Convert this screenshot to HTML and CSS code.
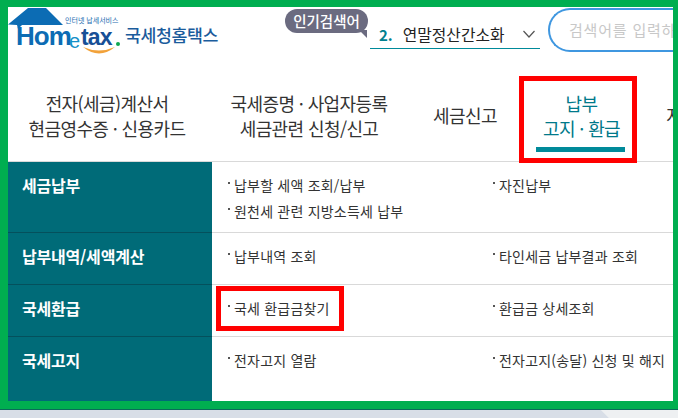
FILE: index.html
```html
<!DOCTYPE html>
<html lang="ko">
<head>
    <meta charset="UTF-8">
    <title>국세청홈택스</title>
    <link rel="stylesheet" href="styles.css">
</head>
<body>
    <div class="frame">
        <div class="header">
            <svg class="logo" width="277" height="54" viewBox="8 7 277 54">
                <!-- 지붕 -->
                <path d="M8 24.5 L28 8 L46 8 L63 25 L22 25 L18 29 L17 25 Z" fill="#0c6cb4"/>
                <path d="M83 47 Q99 60 115 47 Q99 54 83 47 Z" fill="#f2a23a"/>
                <circle cx="118" cy="44" r="2" fill="#10a850"/>
                <text class="logo-sub" x="65" y="23">인터넷 납세서비스</text>
                <text class="logo-home" x="16" y="45">Hom</text>
                <text class="logo-e" x="69" y="48">e</text>
                <text class="logo-tax" x="81" y="45">tax</text>
                <text class="logo-name" x="125" y="42">국세청홈택스</text>
            </svg>
            <div class="badge">인기검색어</div>
            <div class="rank">
                <span class="rank-num">2.</span>
                <span class="rank-text">연말정산간소화</span>
                <svg width="12" height="8" viewBox="0 0 12 8"><path d="M0.5 1 L6 7 L11.5 1" fill="none" stroke="#555" stroke-width="1.2"/></svg>
            </div>
            <div class="search">검색어를 입력하세요</div>
        </div>

        <div class="nav">
            <div class="nav-item nav-first">전자(세금)계산서<br>현금영수증 · 신용카드</div>
            <div class="nav-item nav-second">국세증명 · 사업자등록<br>세금관련 신청/신고</div>
            <div class="nav-item nav-third">세금신고</div>
            <div class="nav-item nav-active">납부<br>고지 · 환급<span class="mark-nav"></span></div>
            <div class="nav-item nav-last">지급명세</div>
        </div>

        <div class="menu">
            <div class="menu-row row-a">
                <div class="menu-title">세금납부</div>
                <div class="menu-links">
                    <div class="link">납부할 세액 조회/납부</div>
                    <div class="link">자진납부</div>
                    <div class="link">원천세 관련 지방소득세 납부</div>
                </div>
            </div>
            <div class="menu-row row-b">
                <div class="menu-title">납부내역/세액계산</div>
                <div class="menu-links">
                    <div class="link">납부내역 조회</div>
                    <div class="link">타인세금 납부결과 조회</div>
                </div>
            </div>
            <div class="menu-row row-b">
                <div class="menu-title">국세환급</div>
                <div class="menu-links">
                    <div class="link link-marked">국세 환급금찾기<span class="mark-link"></span></div>
                    <div class="link">환급금 상세조회</div>
                </div>
            </div>
            <div class="menu-row row-c">
                <div class="menu-title">국세고지</div>
                <div class="menu-links">
                    <div class="link">전자고지 열람</div>
                    <div class="link">전자고지(송달) 신청 및 해지</div>
                </div>
            </div>
        </div>
    </div>
</body>
</html>
```

FILE: styles.css
```css
* {
    margin: 0;
    padding: 0;
    box-sizing: border-box;
}

html, body {
    height: 418px;
    overflow: hidden;
}

body {
    font-family: "Noto Sans CJK KR", "Noto Sans", sans-serif;
    background: linear-gradient(45deg, #d8dee7 430px, #eef0f2 431px);
    color: #333;
}

.frame {
    height: 409px;
    width: 678px;
    background: #fff;
    border-style: solid;
    border-color: #00ae50;
    border-width: 7px 5px 8px 8px;
    box-shadow: 0 1px 0 #0a6a5a;
    overflow: hidden;
}

/* 상단 */
.header {
    display: flex;
    align-items: flex-start;
    height: 54px;
}

.logo {
    flex: none;
}

.logo-sub {
    font-size: 7px;
    fill: #1c6bb0;
}

.logo-home {
    font-family: "Liberation Sans", sans-serif;
    font-size: 26px;
    font-weight: bold;
    letter-spacing: -1px;
    fill: #0c6cb4;
}

.logo-e {
    font-family: "Liberation Sans", sans-serif;
    font-size: 20px;
    fill: #1590c8;
}

.logo-tax {
    font-family: "Liberation Sans", sans-serif;
    font-size: 23px;
    font-weight: bold;
    letter-spacing: -0.8px;
    fill: #174f96;
}

.logo-name {
    font-size: 17.3px;
    font-weight: 500;
    letter-spacing: -0.4px;
    fill: #1b5c9c;
}

.badge {
    position: relative;
    flex: none;
    width: 83px;
    height: 24px;
    margin-top: 2px;
    background: #6b6b80;
    border-radius: 12px;
    color: #fff;
    font-size: 14.5px;
    font-weight: 500;
    line-height: 23px;
    text-align: center;
}

.badge::after {
    content: "";
    position: absolute;
    right: 1px;
    bottom: -5px;
    border-style: solid;
    border-width: 0 8px 8px 0;
    border-color: transparent #6b6b80 transparent transparent;
}

.rank {
    flex: none;
    display: flex;
    align-items: center;
    width: 170px;
    height: 29px;
    margin: 13px 0 0 2px;
    padding: 0 5px 0 9px;
    border-bottom: 1px solid #008a9a;
    font-size: 15.8px;
    color: #222;
}

.rank-num {
    color: #00808f;
    font-size: 15px;
    font-weight: bold;
    margin-right: 10px;
}

.rank-text {
    flex: 1;
}

.search {
    flex: none;
    width: 140px;
    height: 44px;
    margin: 1px 0 0 8px;
    padding-left: 19px;
    border: 2px solid #3f97e0;
    border-right: none;
    border-radius: 22px 0 0 22px;
    color: #c8c8c8;
    font-size: 15px;
    letter-spacing: 0.8px;
    line-height: 40px;
    white-space: nowrap;
    overflow: hidden;
}

/* 메뉴 탭 */
.nav {
    display: flex;
    height: 101px;
    border-bottom: 1px solid #d9d9d9;
    font-size: 18px;
    letter-spacing: -0.6px;
    line-height: 25px;
    color: #333;
}

.nav-item {
    flex: none;
    text-align: center;
    white-space: nowrap;
    padding-top: 30px;
}

.nav-first { width: 198px; }
.nav-second { width: 206px; }
.nav-third { width: 106px; padding-top: 42px; }
.nav-last { width: 30px; text-align: left; padding: 42px 0 0 23px; overflow: hidden; }

.nav-active {
    position: relative;
    width: 123px;
    margin-left: 2px;
    color: #00798a;
}

.mark-nav {
    position: absolute;
    left: -1px;
    top: 15px;
    width: 118px;
    height: 87px;
    border: 5px solid #f00;
}

.mark-nav::after {
    content: "";
    position: absolute;
    left: 12px;
    bottom: 6px;
    width: 89px;
    height: 5px;
    background: #008a9a;
}

/* 하위 메뉴 */
.menu-row {
    display: flex;
    border-bottom: 1px solid #d9d9d9;
    font-size: 14px;
}

.row-a { height: 71px; }
.row-b { height: 52px; }
.row-c { height: 64px; border-bottom: none; }

.menu-title {
    flex: none;
    width: 204px;
    padding: 13px 0 0 14px;
    background: #006b78;
    border-bottom: 1px solid #04505c;
    margin-bottom: -1px;
    color: #fff;
    font-size: 16px;
    font-weight: bold;
    line-height: 21px;
    letter-spacing: -0.2px;
}

.row-c .menu-title {
    border-bottom: none;
    margin-bottom: 0;
}

.menu-links {
    display: grid;
    grid-template-columns: 265px 1fr;
    grid-auto-rows: 26px;
    align-content: start;
    padding: 10px 0 0 16px;
    white-space: nowrap;
}

.link {
    position: relative;
    padding-left: 6px;
    line-height: 26px;
    letter-spacing: 0.2px;
}

.link::before {
    content: "";
    position: absolute;
    left: 0;
    top: 10px;
    width: 2px;
    height: 2px;
    background: #555;
}

.mark-link {
    position: absolute;
    left: -12px;
    top: -9px;
    width: 128px;
    height: 45px;
    border: 5px solid #f00;
}
```
